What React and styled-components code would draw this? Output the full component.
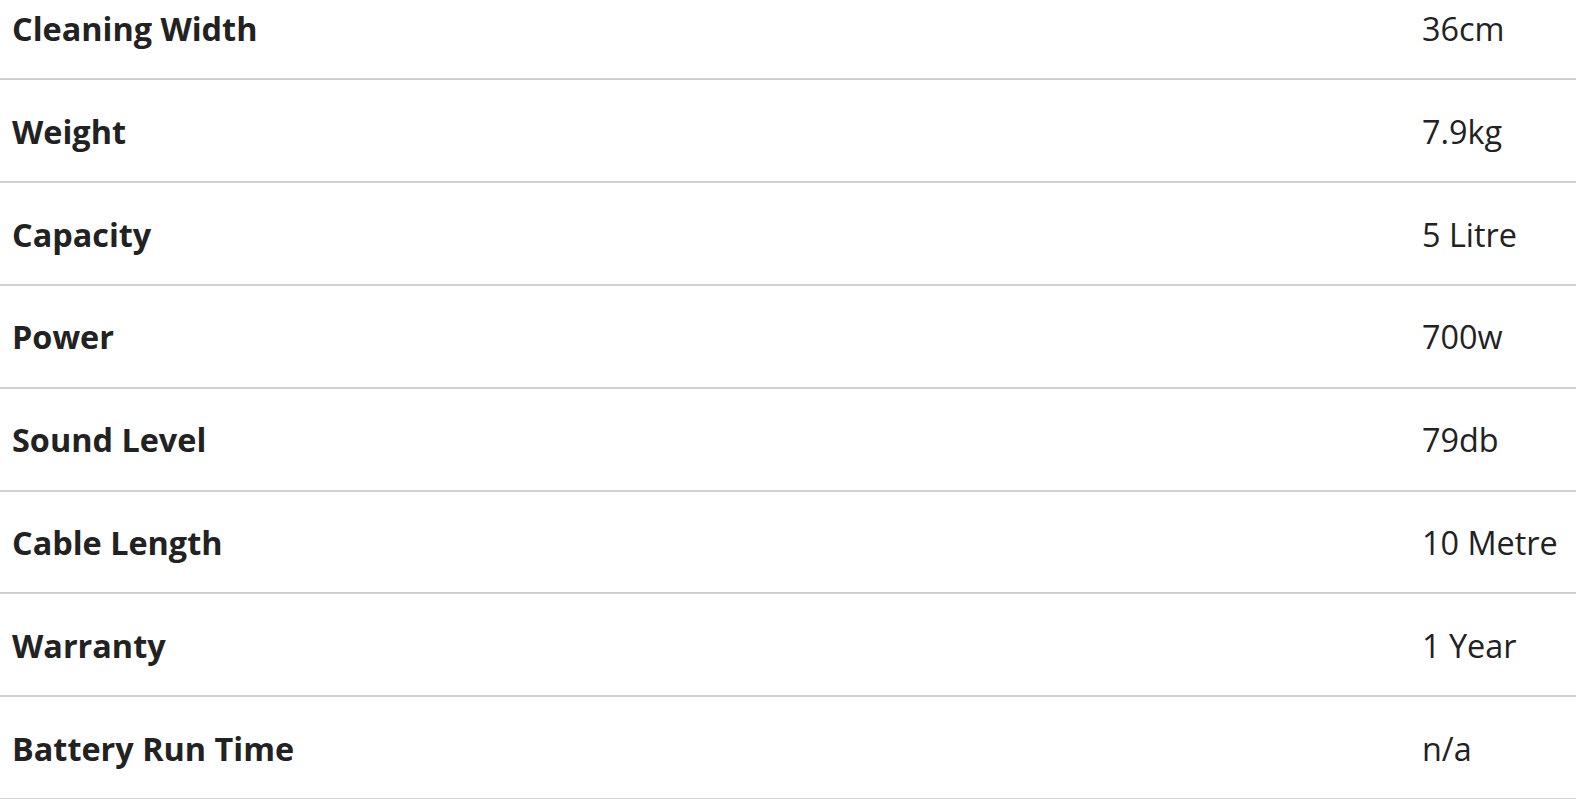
import React from "react";
import styled, { createGlobalStyle } from "styled-components";

const Global = createGlobalStyle`
  html, body { margin: 0; padding: 0; background: #fff; overflow: hidden; }
  body { font-family: "Open Sans", "Liberation Sans", sans-serif; color: #222; }
`;

const Table = styled.div`
  margin-top: -22.4px;
  width: 1576px;
`;

const Row = styled.div`
  display: grid;
  grid-template-columns: 1fr 154px;
  align-items: center;
  height: 102.8px;
  box-sizing: border-box;
  border-bottom: 2px solid #d0d0d0;
`;

const Label = styled.div`
  padding-left: 12px;
  font-weight: 700;
  font-size: 32.4px;
  color: #222;
`;

const Value = styled.div`
  font-weight: 400;
  font-size: 32.4px;
  color: #222;
  white-space: nowrap;
`;

const specs = [
  ["Cleaning Width", "36cm"],
  ["Weight", "7.9kg"],
  ["Capacity", "5 Litre"],
  ["Power", "700w"],
  ["Sound Level", "79db"],
  ["Cable Length", "10 Metre"],
  ["Warranty", "1 Year"],
  ["Battery Run Time", "n/a"],
];

export default function App() {
  return (
    <>
      <Global />
      <Table>
        {specs.map(([k, v]) => (
          <Row key={k}>
            <Label>{k}</Label>
            <Value>{v}</Value>
          </Row>
        ))}
      </Table>
    </>
  );
}
